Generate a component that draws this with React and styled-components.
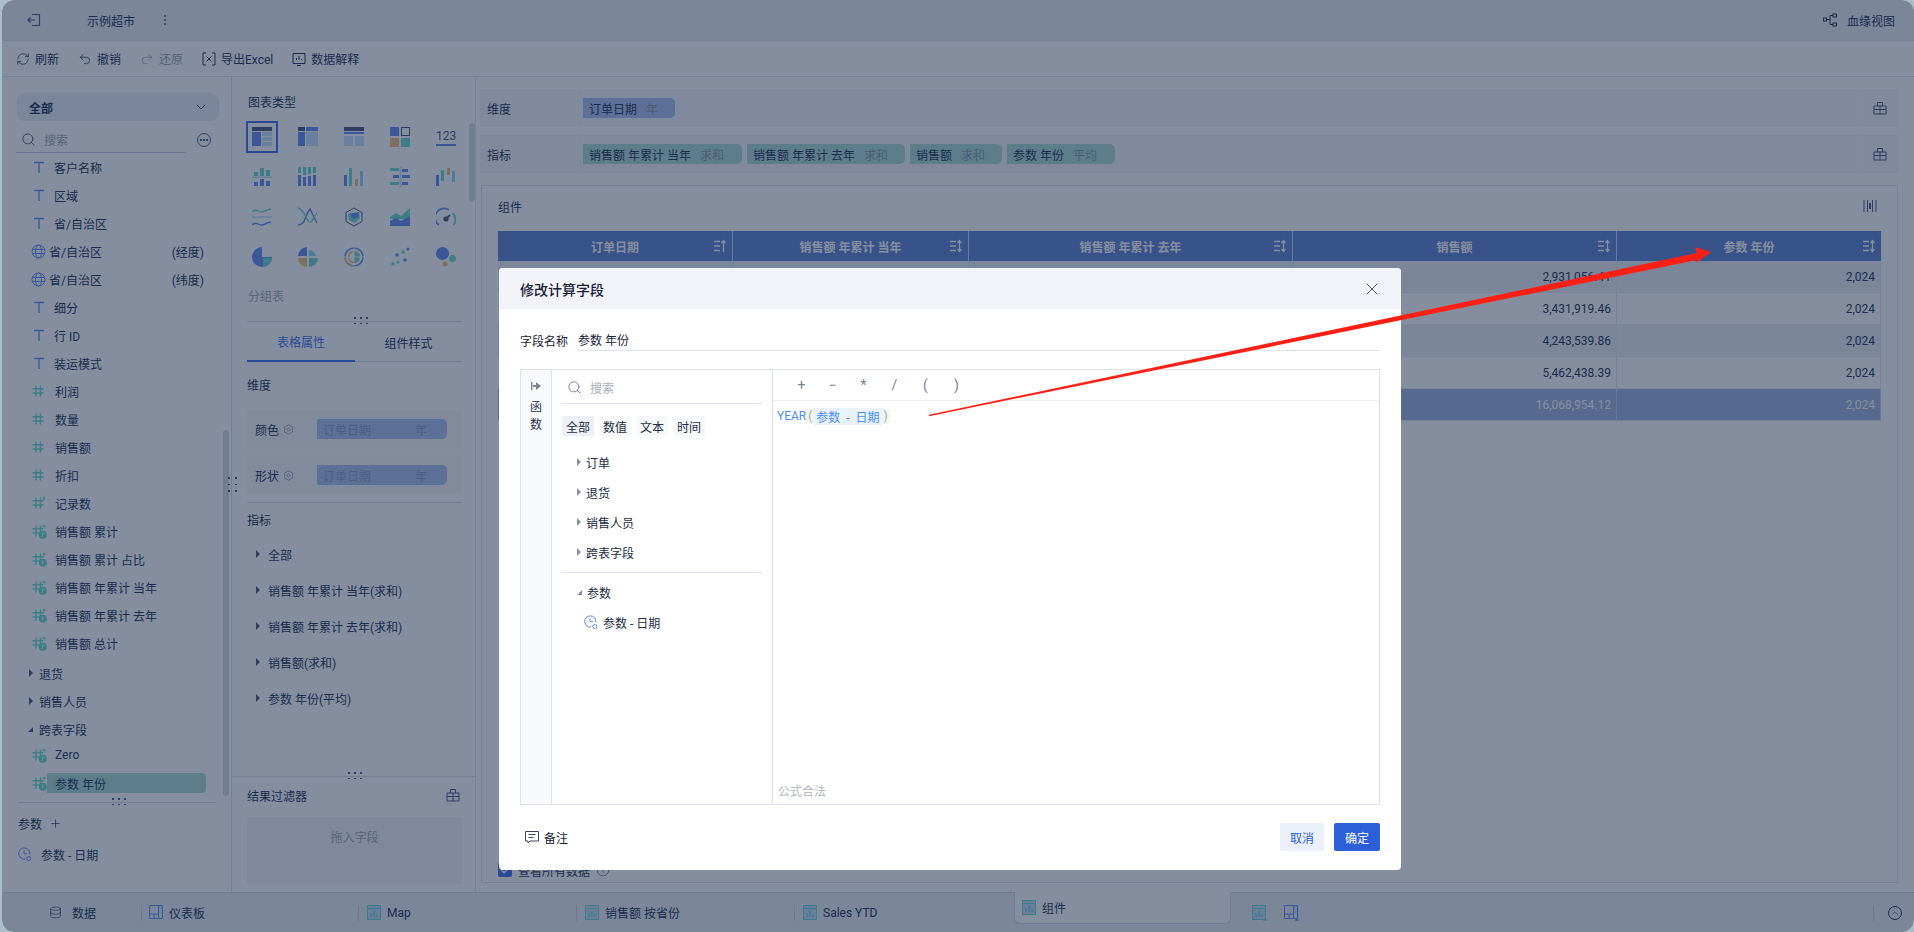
import React from 'react';
import styled, { createGlobalStyle } from 'styled-components';
import { X, ChevronDown, Search, Plus, ChevronUp, Database, RefreshCw, Undo2, Redo2, Info, Check } from 'lucide-react';

const ink = '#2b3a5e';
const blue = '#6a90f5';
const teal = '#6fdcd0';
const brown = '#f0bf80';
const sky = '#8fd8f5';
const navy = '#515f87';
const pale = '#c9e1ff';
const line = '#dde2ec';

const GlobalStyle = createGlobalStyle`
  html, body { margin: 0; padding: 0; height: 100%; overflow: hidden; background: #a9bcc8; }
  body { font-family: Roboto, "Noto Sans CJK SC", sans-serif; font-size: 12px; color: ${ ink }; }
  *, *::before, *::after { box-sizing: border-box; }
`;

const Stage = styled.div`
  position: relative;
  width: 1914px;
  height: 932px;
  padding-left: 2px;
`;

const Frame = styled.div`
  position: relative;
  display: flex;
  flex-direction: column;
  width: 1912px;
  height: 932px;
  overflow: hidden;
  border-radius: 12px;
  background: #fff;
`;

const Header = styled.header`
  display: flex;
  flex: 0 0 41px;
  align-items: center;
  background: #ebeff7;
  border-bottom: 1px solid #dfe4ee;
`;

const BackCell = styled.div`
  display: flex;
  justify-content: center;
  width: 64px;
  height: 40px;
  align-items: center;
  border-right: 1px solid #e4e8f1;
`;

const Title = styled.span`
  width: 77px;
  margin-left: 21px;
  color: ${ ink };
`;

const Kebab = styled.span`
  display: flex;
  flex-direction: column;
  gap: 2px;
  i { width: 2px; height: 2px; background: ${ navy }; border-radius: 50%; }
`;

const LineageLink = styled.div`
  display: flex;
  align-items: center;
  gap: 9px;
  margin-left: auto;
  margin-right: 19px;
`;

const Toolbar = styled.div`
  display: flex;
  flex: 0 0 36px;
  align-items: center;
  padding-left: 14px;
  border-bottom: 1px solid #e1e5ee;
`;

const ToolButton = styled.div`
  display: flex;
  align-items: center;
  gap: 5px;
  margin-right: ${ (props) => props.$gap }px;
  color: ${ (props) => (props.$off ? '#9aa3b8' : ink) };
`;

const Body = styled.div`
  display: flex;
  flex: 1;
  min-height: 0;
`;

const FieldPanel = styled.aside`
  position: relative;
  display: flex;
  flex-direction: column;
  flex: 0 0 230px;
  min-width: 0;
  border-right: 1px solid #dfe3ec;
`;

const SourceSelect = styled.div`
  display: flex;
  flex: 0 0 28px;
  align-items: center;
  justify-content: space-between;
  margin: 16px 12px 0 15px;
  padding: 0 10px 0 12px;
  border-radius: 8px;
  background: #e8eef8;
  font-weight: 700;
`;

const SearchRow = styled.div`
  display: flex;
  flex: 0 0 32px;
  align-items: center;
  margin-left: 14px;
`;

const SearchBox = styled.div`
  display: flex;
  align-items: center;
  gap: 8px;
  width: 170px;
  height: 26px;
  padding: 0 0 0 5px;
  margin-top: 5px;
  border-bottom: 1px solid #c9cfdc;
  color: #a4abbb;
`;

const RoundButton = styled.span`
  display: flex;
  align-items: center;
  justify-content: center;
  width: 14px;
  height: 14px;
  gap: 1.5px;
  margin: 6px 0 0 11px;
  border: 1px solid ${ navy };
  border-radius: 50%;
  i { width: 1.5px; height: 1.5px; background: ${ navy }; }
`;

const FieldList = styled.div`
  flex: 1;
  min-height: 0;
  overflow: hidden;
`;

const FieldRow = styled.div`
  display: flex;
  align-items: center;
  height: 28px;
  padding-left: ${ (props) => (props.$geo ? 29 : 30) }px;
  gap: ${ (props) => (props.$geo ? 3 : 8) }px;
`;

const FieldName = styled.span`
  white-space: pre;
`;

const Picked = styled.span`
  display: flex;
  align-items: center;
  width: 159px;
  height: 20px;
  margin-left: -8px;
  padding-left: 8px;
  border-radius: 0 4px 4px 0;
  background: #b1dddb;
`;

const GeoNote = styled.span`
  margin-left: auto;
  margin-right: 27px;
`;

const GroupRow = styled.div`
  display: flex;
  align-items: center;
  gap: 6px;
  height: 28px;
  padding-left: ${ (props) => props.$left }px;
  margin-top: ${ (props) => props.$top || 0 }px;
  margin-bottom: ${ (props) => props.$bottom || 0 }px;
`;

const Caret = styled.i`
  width: 0;
  height: 0;
  flex: none;
  border-style: solid;
  border-width: 4px 0 4px 4px;
  border-color: transparent transparent transparent ${ (props) => props.$color || navy };
`;

const OpenCaret = styled.i`
  width: 0;
  height: 0;
  flex: none;
  border-style: solid;
  border-width: 0 0 5px 5px;
  border-color: transparent transparent ${ (props) => props.$color || navy } transparent;
`;

const ScrollThumb = styled.span`
  position: absolute;
  width: 6px;
  border-radius: 3px;
  background: #d7dde8;
  left: ${ (props) => props.$left }px;
  top: ${ (props) => props.$top }px;
  height: ${ (props) => props.$height }px;
`;

const Grip = styled.span`
  position: absolute;
  display: grid;
  grid-template-columns: repeat(${ (props) => (props.$tall ? 2 : 3) }, 2px);
  gap: ${ (props) => (props.$tall ? '5px 5px' : '4px 4px') };
  left: ${ (props) => props.$left }px;
  top: ${ (props) => props.$top }px;
  i { width: 1.5px; height: 1.5px; background: ${ navy }; }
`;

const ParamSection = styled.div`
  position: relative;
  flex: 0 0 90px;
  margin: 0 15px 0 16px;
  border-top: 1px solid #d9deea;
`;

const ParamHead = styled.div`
  display: flex;
  align-items: center;
  gap: 7px;
  height: 18px;
  margin-top: 11px;
`;

const ParamRow = styled.div`
  display: flex;
  align-items: center;
  gap: 9px;
  margin-top: 12px;
  height: 20px;
`;

const ChartPanel = styled.section`
  position: relative;
  display: flex;
  flex-direction: column;
  flex: 0 0 244px;
  min-width: 0;
  border-right: 1px solid #e5e8f0;
`;

const SectionLabel = styled.div`
  height: 18px;
  line-height: 18px;
  padding-left: ${ (props) => props.$left || 15 }px;
  margin-top: ${ (props) => props.$top || 0 }px;
  color: ${ (props) => (props.$dim ? '#a4abbb' : ink) };
`;

const ChartGrid = styled.div`
  display: grid;
  grid-template-columns: repeat(5, 46px);
  grid-auto-rows: 40px;
  margin: 5px 0 0 7px;
`;

const ChartCell = styled.div`
  position: relative;
  display: flex;
  align-items: center;
  justify-content: center;
  &::after {
    content: ${ (props) => (props.$on ? '""' : 'none') };
    position: absolute;
    left: 7px;
    top: 4px;
    width: 32px;
    height: 32px;
    border: 2px solid #4977f3;
  }
`;

const ChartDivider = styled.div`
  position: relative;
  height: 1px;
  margin: 15px 13px 0 15px;
  background: #dde1ea;
`;

const TabBar = styled.div`
  display: flex;
  height: 40px;
  margin: 0 13px 0 15px;
  border-bottom: 1px solid #dde1ea;
`;

const PropTab = styled.div`
  display: flex;
  align-items: center;
  justify-content: center;
  flex: ${ (props) => (props.$on ? '0 0 108px' : '1') };
  height: 40px;
  color: ${ (props) => (props.$on ? '#4977f3' : ink) };
  border-bottom: ${ (props) => (props.$on ? '2px solid #4977f3' : 'none') };
`;

const MarkBlock = styled.div`
  display: flex;
  align-items: center;
  height: 38px;
  margin: ${ (props) => props.$top || 0 }px 13px 8px 15px;
  padding-left: 8px;
  background: #f7f8fb;
`;

const MarkName = styled.span`
  width: 24px;
`;

const GearDot = styled.span`
  display: flex;
  width: 12px;
  margin: 0 22px 0 4px;
`;

const MarkChip = styled.div`
  display: flex;
  align-items: center;
  justify-content: space-between;
  width: 130px;
  height: 20px;
  padding: 0 20px 0 6px;
  border-radius: 0 5px 5px 0;
  background: #adc3f3;
  color: #8da0c5;
`;

const PropDivider = styled.div`
  height: 1px;
  margin: 0 13px 0 15px;
  background: #dde1ea;
`;

const MeasureList = styled.div`
  margin-top: 6px;
`;

const MeasureRow = styled.div`
  display: flex;
  align-items: center;
  gap: 8px;
  height: 36px;
  padding-left: 24px;
`;

const ResultSection = styled.div`
  position: relative;
  height: 116px;
  margin-top: auto;
  border-top: 1px solid #dde1ea;
  padding: 8px 13px 0 15px;
`;

const ResultHead = styled.div`
  display: flex;
  align-items: center;
  justify-content: space-between;
  height: 20px;
  padding-right: 2px;
`;

const DropArea = styled.div`
  display: flex;
  justify-content: center;
  height: 67px;
  margin-top: 12px;
  padding-top: 11px;
  background: #f3f4f8;
  color: #a4abbb;
`;

const Main = styled.main`
  display: flex;
  flex: 1;
  flex-direction: column;
  min-width: 0;
  padding: 12px 16px 9px 4px;
`;

const ShelfRow = styled.div`
  display: flex;
  align-items: center;
  flex: 0 0 38px;
  margin-bottom: 8px;
  background: #f6f7fa;
`;

const ShelfLabel = styled.div`
  display: flex;
  align-items: center;
  flex: 0 0 97px;
  height: 100%;
  padding-left: 7px;
  border-right: 1px solid #fafbfd;
`;

const ShelfChips = styled.div`
  display: flex;
  flex: 1;
  gap: 5px;
  padding-left: 6px;
`;

const Pill = styled.div`
  display: flex;
  align-items: center;
  gap: 6px;
  height: 20px;
  width: ${ (props) => props.$width }px;
  padding-left: 6px;
  border-radius: 0 5px 5px 0;
  background: ${ (props) => (props.$kind === 'dim' ? '#adc3f3' : '#b1dddb') };
  white-space: pre;
  em { font-style: normal; color: #8a99b0; }
`;

const ShelfTool = styled.div`
  display: flex;
  align-items: center;
  justify-content: center;
  flex: 0 0 37px;
  height: 100%;
  border-left: 1px solid #fafbfd;
`;

const Canvas = styled.section`
  display: flex;
  flex: 1;
  flex-direction: column;
  margin: 4px 0 0 1px;
  padding: 0 16px 3px 16px;
  border: 1px solid #e0e4ec;
`;

const CanvasHead = styled.div`
  display: flex;
  align-items: center;
  justify-content: space-between;
  flex: 0 0 45px;
  padding: 0 4px 5px 0;
`;

const DataGrid = styled.div`
  display: grid;
  grid-template-columns: 235px 236px 324px 324px 264px;
`;

const HeadCell = styled.div`
  position: relative;
  display: flex;
  align-items: center;
  justify-content: center;
  height: 30px;
  background: #6587d7;
  border-right: 1px solid #cfdaf3;
  color: #fff;
  font-weight: 700;
  &:nth-child(5) { border-right: none; }
`;

const SortMark = styled.span`
  position: absolute;
  display: flex;
  right: 5px;
  top: 8px;
`;

const BodyCell = styled.div`
  display: flex;
  align-items: center;
  justify-content: flex-end;
  height: 32px;
  padding-right: 5px;
  background: ${ (props) => (props.$total ? '#a0b4df' : props.$odd ? '#ebeff9' : '#fff') };
  color: ${ (props) => (props.$total ? '#fff' : '#2e3c5c') };
  border-right: 1px solid ${ (props) => (props.$total ? '#c7d4f0' : '#e6e9f0') };
  border-bottom: 1px solid #e6e9f0;
`;

const AllData = styled.div`
  display: flex;
  align-items: center;
  gap: 6px;
  height: 18px;
  margin-top: auto;
`;

const CheckBox = styled.span`
  display: flex;
  align-items: center;
  justify-content: center;
  width: 14px;
  height: 14px;
  border-radius: 2px;
  background: #4977f3;
  color: #fff;
`;

const Footer = styled.footer`
  display: flex;
  flex: 0 0 40px;
  align-items: center;
  background: #ebeff7;
  border-top: 1px solid #d5dbe8;
`;

const SheetTab = styled.div`
  display: flex;
  align-items: center;
  gap: ${ (props) => props.$gap || 5 }px;
  width: ${ (props) => props.$width }px;
  height: 16px;
  padding-left: ${ (props) => props.$left }px;
  border-right: 1px solid ${ (props) => (props.$edge ? '#cdd3e0' : 'transparent') };
  white-space: pre;
`;

const ActiveTab = styled.div`
  display: flex;
  align-items: center;
  gap: 5px;
  align-self: flex-start;
  width: 217px;
  height: 32px;
  margin-top: -1px;
  padding-left: 7px;
  border: 1px solid #d5dbe8;
  border-top: none;
  border-radius: 0 0 6px 6px;
  background: #fff;
`;

const AddSheets = styled.div`
  display: flex;
  gap: 17px;
  margin-left: 21px;
`;

const Collapse = styled.div`
  display: flex;
  align-items: center;
  justify-content: center;
  width: 33px;
  height: 16px;
  margin-left: auto;
  margin-right: 8px;
  border-left: 1px solid #cdd3e0;
  padding-left: 9px;
`;

const CollapseRound = styled.span`
  display: flex;
  align-items: center;
  justify-content: center;
  width: 14px;
  height: 14px;
  border: 1px solid ${ ink };
  border-radius: 50%;
`;

const Overlay = styled.div`
  position: absolute;
  inset: 0;
  padding: 268px 0 0 497px;
  background: rgba(11, 29, 61, 0.5);
`;

const Modal = styled.div`
  display: flex;
  flex-direction: column;
  width: 902px;
  height: 602px;
  border-radius: 4px;
  overflow: hidden;
  background: #fff;
`;

const ModalHead = styled.div`
  display: flex;
  align-items: center;
  justify-content: space-between;
  flex: 0 0 41px;
  padding: 0 19px 0 21px;
  background: #f2f3f8;
  font-size: 14px;
  font-weight: 500;
  color: #1a2238;
`;

const NameRow = styled.div`
  display: flex;
  align-items: center;
  gap: 10px;
  height: 22px;
  margin: 20px 21px 0;
  color: #1a2238;
`;

const NameInput = styled.div`
  display: flex;
  align-items: center;
  flex: 1;
  height: 22px;
  padding-bottom: 1px;
  border-bottom: 1px solid ${ line };
`;

const Editor = styled.div`
  display: flex;
  flex: 0 0 436px;
  margin: 18px 21px 0;
  border: 1px solid ${ line };
`;

const FnRail = styled.div`
  display: flex;
  flex-direction: column;
  align-items: center;
  flex: 0 0 31px;
  padding-top: 9px;
  background: #f8f9fd;
  border-right: 1px solid ${ line };
  line-height: 18px;
  color: #2b3550;
`;

const RailIcon = styled.span`
  display: flex;
  height: 14px;
  margin-bottom: 5px;
`;

const FnList = styled.div`
  display: flex;
  flex-direction: column;
  flex: 0 0 221px;
  border-right: 1px solid ${ line };
`;

const FnSearch = styled.div`
  display: flex;
  align-items: center;
  gap: 8px;
  height: 34px;
  margin: 0 10px;
  padding-left: 5px;
  padding-top: 2px;
  border-bottom: 1px solid ${ line };
  color: #a8aebb;
`;

const KindTabs = styled.div`
  display: flex;
  gap: 5px;
  margin: 12px 10px 11px;
`;

const KindTab = styled.span`
  display: flex;
  align-items: center;
  justify-content: center;
  width: 32px;
  height: 20px;
  border-radius: 2px;
  background: ${ (props) => (props.$on ? '#eef0f5' : '#f8f9fb') };
  color: #222c44;
`;

const TreeRow = styled.div`
  display: flex;
  align-items: center;
  gap: 5px;
  height: 30px;
  padding-left: ${ (props) => props.$left || 25 }px;
  color: #222c44;
`;

const TreeDivider = styled.div`
  height: 1px;
  margin: 5px 10px 4px;
  background: ${ line };
`;

const Formula = styled.div`
  display: flex;
  flex-direction: column;
  flex: 1;
  min-width: 0;
`;

const OpsBar = styled.div`
  display: flex;
  flex: 0 0 31px;
  align-items: center;
  padding-left: 13px;
  border-bottom: 1px solid #eceef4;
`;

const Op = styled.span`
  width: 31px;
  text-align: center;
  font-size: 14px;
  color: #7c8291;
`;

const FormulaLine = styled.div`
  display: flex;
  align-items: center;
  height: 16px;
  margin: 7px 0 0 4px;
  color: #4c8cf5;
`;

const ParenMark = styled.span`
  padding: 0 2px;
  background: #f1f6f1;
  color: #a9a9a0;
`;

const TokenMark = styled.span`
  padding: 0 2px;
  background: #e9f3ff;
  color: #4c8cf5;
  white-space: pre;
`;

const FormulaStatus = styled.div`
  margin-top: auto;
  padding: 0 0 5px 5px;
  color: #b1b5c0;
`;

const ModalFoot = styled.div`
  display: flex;
  align-items: center;
  margin: 18px 21px 0;
  height: 28px;
`;

const NoteLink = styled.div`
  display: flex;
  align-items: center;
  gap: 5px;
  padding-left: 5px;
  margin-right: auto;
  color: #1a2238;
`;

const ModalButton = styled.button`
  width: ${ (props) => (props.$primary ? 46 : 44) }px;
  height: 28px;
  margin-left: ${ (props) => (props.$primary ? 10 : 0) }px;
  padding: 0;
  border: none;
  border-radius: 2px;
  background: ${ (props) => (props.$primary ? '#2c60db' : '#ebf0fb') };
  color: ${ (props) => (props.$primary ? '#fff' : '#2c60db') };
  font: inherit;
`;

const ArrowLayer = styled.svg`
  position: absolute;
  left: 0;
  top: 0;
  pointer-events: none;
`;

const Dots = ({ n = 3 }) => Array.from({ length: n }).map((_, i) => <i key={ i } />);

const TextIcon = () => (
  <svg width="14" height="14" viewBox="0 0 14 14" fill="none" stroke={ blue } strokeWidth="1.3"><path d="M2 2.5h10M7 2.5V13" /></svg>
);

const HashIcon = ({ star, calc }) => (
  <svg width="15" height="15" viewBox="0 0 15 15" fill="none" stroke={ teal } strokeWidth="1.4">
    <path d="M4 1.5v11M8.5 1.5v11M0.5 4.8h11M0.5 9h11" />
    { star && <path d="M12 0.5v3.4M10.4 2.2h3.2" strokeWidth="1" /> }
    { calc && <circle cx="10.8" cy="10.8" r="4" fill={ teal } stroke="none" /> }
    { calc && <path d="M11.8 8.8h-1l-.6 4" stroke="#fff" strokeWidth=".9" /> }
  </svg>
);

const GlobeIcon = () => (
  <svg width="15" height="15" viewBox="0 0 15 15" fill="none" stroke={ blue } strokeWidth="1">
    <circle cx="7.5" cy="7.5" r="6.5" /><ellipse cx="7.5" cy="7.5" rx="3" ry="6.5" /><path d="M1 5.5h13M1 9.5h13" />
  </svg>
);

const ClockIcon = ({ color = blue }) => (
  <svg width="14" height="15" viewBox="0 0 14 15" fill="none" stroke={ color } strokeWidth="1">
    <path d="M11.8 7.2A5.6 5.6 0 1 0 7.2 12" /><path d="M6 3.5v3.2h3" /><circle cx="10.8" cy="11.5" r="2" />
  </svg>
);

const FieldGlyph = ({ type }) => {
  if (type === 't') return <TextIcon />;
  if (type === 'geo') return <GlobeIcon />;
  if (type === 'star') return <HashIcon star />;
  if (type === 'calc') return <HashIcon star calc />;
  return <HashIcon />;
};

const ShelfBox = () => (
  <svg width="14" height="14" viewBox="0 0 14 14" fill="none" stroke={ navy } strokeWidth="1"><path d="M1 5h12v8H1zM4.5 5V1.5h5V5M7 5v8M1 8.5h12" /></svg>
);

const Gear = () => (
  <svg width="11" height="11" viewBox="0 0 11 11" fill="none" stroke="#a4abbb"><path d="M5.5.8l4 2.3v4.8l-4 2.3-4-2.3V3.1z" /><circle cx="5.5" cy="5.5" r="1.5" /></svg>
);

const SortIcon = ({ up }) => (
  <svg width="14" height="14" viewBox="0 0 14 14" fill="none" stroke="#fff" strokeWidth="1.3">
    <path d="M1 2.5h6M1 7h6M1 11.5h6M10.5 13V2" />
    <path d="M8.5 4l2-2.5 2 2.5" />
    { !up && <path d="M8.5 10l2 2.5 2-2.5" /> }
  </svg>
);

const SheetIcon = ({ plus }) => (
  <svg width="15" height="16" viewBox="0 0 15 16" fill="none">
    <rect x=".5" y=".5" width="13" height="14" fill={ pale } stroke={ teal } />
    <path d="M.5 3.5h13" stroke={ teal } />
    <path d="M4 12V8M7 12V6M10 12V9" stroke={ teal } strokeWidth="1.4" />
    { plus && <path d="M11 15h4M13 13v3" stroke={ teal } /> }
  </svg>
);

const DashIcon = ({ plus }) => (
  <svg width="15" height="16" viewBox="0 0 15 16" fill="none" stroke={ blue }>
    <path d="M.5.5h13v13H.5zM.5 9h9M9.5.5v13M5 9v4.5" />
    <path d="M10 1h3v4h-3zM10 6h3v3h-3z" fill={ pale } stroke="none" />
    { plus && <path d="M11 15h4M13 13v3" /> }
  </svg>
);

const charts = [
  <><rect width="20" height="4" fill={ navy } /><rect y="5" width="9" height="14" fill={ blue } /><rect x="10" y="5" width="10" height="4" fill={ pale } /><rect x="10" y="10" width="10" height="4" fill={ pale } /><rect x="10" y="15" width="10" height="4" fill={ pale } /></>,
  <><rect width="7" height="4" fill={ navy } /><rect x="8" width="12" height="4" fill={ blue } /><rect y="5" width="7" height="14" fill={ blue } /><rect x="8" y="5" width="12" height="14" fill={ pale } /></>,
  <><rect width="20" height="4" fill={ navy } /><rect y="5" width="20" height="2" fill={ blue } /><rect y="9" width="9" height="10" fill={ pale } /><rect x="11" y="9" width="9" height="10" fill={ pale } /></>,
  <><rect width="9" height="9" fill={ blue } /><rect x="11.5" y=".5" width="8" height="8" fill="none" stroke={ navy } /><rect y="11" width="9" height="9" fill={ brown } /><rect x="11" y="11" width="9" height="9" fill={ teal } /></>,
  <><text x="10" y="13" fontSize="12" textAnchor="middle" fill={ navy } fontFamily="Roboto, sans-serif">123</text><rect y="17" width="20" height="2" fill={ blue } /></>,
  <><rect x="2" y="5" width="4" height="4" fill={ teal } /><rect x="8" y="1" width="4" height="8" fill={ teal } /><rect x="14" y="3" width="4" height="6" fill={ teal } /><rect y="9.5" width="20" height="1.5" fill={ pale } /><rect x="2" y="15" width="4" height="4" fill={ blue } /><rect x="8" y="12" width="4" height="7" fill={ blue } /><rect x="14" y="14" width="4" height="5" fill={ blue } /></>,
  <>{ [0, 5, 10, 15].map((x) => <g key={ x }><rect x={ x } y="0" width="3" height={ 6 + x % 3 } fill={ teal } /><rect x={ x } y={ 8 + x % 3 } width="3" height={ 11 - x % 3 } fill={ blue } /></g>) }</>,
  <><rect y="8" width="3" height="11" fill={ blue } /><rect x="5" y="1" width="3" height="18" fill={ teal } /><rect x="11" y="12" width="3" height="7" fill={ brown } /><rect x="16" y="4" width="3" height="15" fill={ sky } /></>,
  <><rect x="9.5" width="2" height="20" fill={ pale } /><rect y="1" width="9" height="3" fill={ teal } /><rect x="12" y="2" width="6" height="3" fill={ blue } /><rect x="3" y="8" width="6" height="3" fill={ blue } /><rect x="12" y="8" width="8" height="3" fill={ blue } /><rect y="15" width="9" height="3" fill={ teal } /><rect x="12" y="15" width="6" height="3" fill={ blue } /></>,
  <><rect y="8" width="3" height="11" fill={ blue } /><rect x="5" y="3" width="3" height="11" fill={ teal } /><rect x="11" y="1" width="3" height="7" fill={ brown } /><rect x="16" y="4" width="3" height="11" fill={ sky } /></>,
  <g fill="none" strokeWidth="1.5"><path d="M0 5q3-3 6-1t7 0 6-2" stroke={ teal } /><path d="M0 10h20" stroke={ pale } /><path d="M0 18q3-3 6-1t7 0 6-2" stroke={ blue } /></g>,
  <g fill="none" strokeWidth="1.5"><path d="M0 18q5 0 7-6t5-10l7 14" stroke={ blue } /><path d="M0 1q4 1 8 9t6 4 5-8" stroke={ teal } /></g>,
  <><path d="M10 1l8 4.5v9L10 19l-8-4.5v-9z" fill="none" stroke={ navy } /><path d="M4 7l11-2 1 6-5 5-6-3z" fill={ teal } /><path d="M6 6.5l9-1-1 5-4 1-3-2z" fill={ blue } /></>,
  <><path d="M0 10l6-4 5 3 9-8v11H0z" fill={ teal } /><path d="M0 19v-5l6-3 5 3 9-5v10z" fill={ blue } /></>,
  <g fill="none" strokeWidth="1.8"><path d="M3 18a9 9 0 0 1 10-15" stroke={ blue } /><path d="M16.5 6a9 9 0 0 1 1 12" stroke={ teal } /><circle cx="10" cy="12" r="2.6" fill={ navy } stroke="none" /><path d="M10 12l4-4" stroke={ navy } /></g>,
  <><path d="M10 0a10 10 0 1 0 10 10H10z" fill={ blue } /><path d="M11 11h9a9 9 0 0 1-9 9z" fill={ teal } /></>,
  <><path d="M9 0v9H0a9 9 0 0 1 9-9z" fill={ blue } /><path d="M11 3a8 8 0 0 1 7 6h-7z" fill={ sky } /><path d="M0 11h9v9a9 9 0 0 1-9-9z" fill={ brown } /><path d="M11 11h9a9 9 0 0 1-9 9z" fill={ teal } /></>,
  <g fill="none"><circle cx="10" cy="10" r="9" stroke={ blue } strokeWidth="1.5" /><path d="M1 10a9 9 0 0 0 9 9" stroke={ brown } strokeWidth="1.6" /><circle cx="10" cy="10" r="5.5" stroke={ brown } strokeWidth="1.6" /><path d="M10 4.5a5.5 5.5 0 0 1 0 11z" fill={ teal } /><path d="M10 0v20M0 10h20" stroke="#fff" /></g>,
  <><circle cx="3" cy="17" r="1.7" fill={ teal } /><circle cx="7" cy="8" r="1.8" fill={ blue } /><circle cx="8" cy="15" r="1.5" fill={ teal } /><circle cx="13" cy="5" r="1.8" fill={ teal } /><circle cx="15" cy="13" r="1.8" fill={ blue } /><circle cx="18" cy="2" r="1.6" fill={ blue } /></>,
  <><circle cx="6.5" cy="6.5" r="6.5" fill={ blue } /><circle cx="16.5" cy="11.5" r="3.5" fill={ teal } /><circle cx="9" cy="17" r="2.5" fill={ brown } /></>
];

const fields = [
  ['t', '客户名称'], ['t', '区域'], ['t', '省/自治区'],
  ['geo', '省/自治区', '(经度)'], ['geo', '省/自治区', '(纬度)'],
  ['t', '细分'], ['t', '行 ID'], ['t', '装运模式'],
  ['hash', '利润'], ['hash', '数量'], ['hash', '销售额'], ['hash', '折扣'],
  ['star', '记录数'], ['calc', '销售额 累计'], ['calc', '销售额 累计 占比'],
  ['calc', '销售额 年累计 当年'], ['calc', '销售额 年累计 去年'], ['calc', '销售额 总计']
];

const measureChips = [
  ['销售额 年累计 当年', '求和', 159],
  ['销售额 年累计 去年', '求和', 158],
  ['销售额', '求和', 92],
  ['参数 年份', '平均', 108]
];

const tableRows = [
  ['2,931,056.41', '2,024'],
  ['3,431,919.46', '2,024'],
  ['4,243,539.86', '2,024'],
  ['5,462,438.39', '2,024'],
  ['16,068,954.12', '2,024']
];

const FieldsColumn = () => (
  <FieldPanel>
    <SourceSelect>全部<ChevronDown size={ 16 } strokeWidth={ 1.4 } /></SourceSelect>
    <SearchRow>
      <SearchBox><Search size={ 15 } strokeWidth={ 1.2 } color={ ink } />搜索</SearchBox>
      <RoundButton><Dots /></RoundButton>
    </SearchRow>
    <FieldList>
      { fields.map(([type, name, note], i) => (
        <FieldRow key={ i } $geo={ type === 'geo' }>
          <FieldGlyph type={ type } />
          <FieldName>{ name }</FieldName>
          { note && <GeoNote>{ note }</GeoNote> }
        </FieldRow>
      )) }
      <GroupRow $left={ 27 } $top={ 2 }><Caret />退货</GroupRow>
      <GroupRow $left={ 27 }><Caret />销售人员</GroupRow>
      <GroupRow $left={ 26 } $bottom={ -2 }><OpenCaret />跨表字段</GroupRow>
      <FieldRow><HashIcon star calc /><FieldName>Zero</FieldName></FieldRow>
      <FieldRow><HashIcon star calc /><Picked>参数 年份</Picked></FieldRow>
    </FieldList>
    <ScrollThumb $left={ 221 } $top={ 353 } $height={ 366 } />
    <Grip $tall $left={ 226 } $top={ 400 }><Dots n={ 6 } /></Grip>
    <ParamSection>
      <Grip $left={ 94 } $top={ -5 }><Dots n={ 6 } /></Grip>
      <ParamHead>参数<Plus size={ 13 } strokeWidth={ 1.3 } /></ParamHead>
      <ParamRow><ClockIcon />参数 - 日期</ParamRow>
    </ParamSection>
  </FieldPanel>
);

const ChartColumn = () => (
  <ChartPanel>
    <SectionLabel $left={ 16 } $top={ 17 }>图表类型</SectionLabel>
    <ChartGrid>
      { charts.map((art, i) => (
        <ChartCell key={ i } $on={ i === 0 }>
          <svg width="20" height="20" viewBox="0 0 20 20">{ art }</svg>
        </ChartCell>
      )) }
    </ChartGrid>
    <ScrollThumb $left={ 237 } $top={ 46 } $height={ 78 } />
    <SectionLabel $left={ 16 } $top={ 11 } $dim>分组表</SectionLabel>
    <ChartDivider><Grip $left={ 107 } $top={ -4 }><Dots n={ 6 } /></Grip></ChartDivider>
    <TabBar>
      <PropTab $on>表格属性</PropTab>
      <PropTab>组件样式</PropTab>
    </TabBar>
    <SectionLabel $top={ 15 }>维度</SectionLabel>
    <MarkBlock $top={ 15 }>
      <MarkName>颜色</MarkName><GearDot><Gear /></GearDot>
      <MarkChip><span>订单日期</span><span>年</span></MarkChip>
    </MarkBlock>
    <MarkBlock>
      <MarkName>形状</MarkName><GearDot><Gear /></GearDot>
      <MarkChip><span>订单日期</span><span>年</span></MarkChip>
    </MarkBlock>
    <PropDivider />
    <SectionLabel $top={ 9 }>指标</SectionLabel>
    <MeasureList>
      { ['全部', '销售额 年累计 当年(求和)', '销售额 年累计 去年(求和)', '销售额(求和)', '参数 年份(平均)'].map((name) => (
        <MeasureRow key={ name }><Caret />{ name }</MeasureRow>
      )) }
    </MeasureList>
    <ResultSection>
      <Grip $left={ 116 } $top={ -5 }><Dots n={ 6 } /></Grip>
      <ResultHead>结果过滤器<ShelfBox /></ResultHead>
      <DropArea>拖入字段</DropArea>
    </ResultSection>
  </ChartPanel>
);

const WorkArea = () => (
  <Main>
    <ShelfRow>
      <ShelfLabel>维度</ShelfLabel>
      <ShelfChips><Pill $kind="dim" $width={ 92 }>订单日期 <em>年</em></Pill></ShelfChips>
      <ShelfTool><ShelfBox /></ShelfTool>
    </ShelfRow>
    <ShelfRow>
      <ShelfLabel>指标</ShelfLabel>
      <ShelfChips>
        { measureChips.map(([name, agg, width]) => (
          <Pill key={ name } $width={ width }>{ name } <em>{ agg }</em></Pill>
        )) }
      </ShelfChips>
      <ShelfTool><ShelfBox /></ShelfTool>
    </ShelfRow>
    <Canvas>
      <CanvasHead>
        组件
        <svg width="14" height="14" viewBox="0 0 14 14" fill="none" stroke={ navy }><path d="M1 1v12M13 1v12M4.5 1v12M9.5 1v12" /><path d="M7 4v6" strokeWidth="2" /></svg>
      </CanvasHead>
      <DataGrid>
        { ['订单日期', '销售额 年累计 当年', '销售额 年累计 去年', '销售额', '参数 年份'].map((name, i) => (
          <HeadCell key={ name }>{ name }<SortMark><SortIcon up={ i === 0 } /></SortMark></HeadCell>
        )) }
        { tableRows.map(([sales, year], i) => (
          <React.Fragment key={ sales }>
            <BodyCell $odd={ i % 2 === 0 } $total={ i === 4 } />
            <BodyCell $odd={ i % 2 === 0 } $total={ i === 4 } />
            <BodyCell $odd={ i % 2 === 0 } $total={ i === 4 } />
            <BodyCell $odd={ i % 2 === 0 } $total={ i === 4 }>{ sales }</BodyCell>
            <BodyCell $odd={ i % 2 === 0 } $total={ i === 4 }>{ year }</BodyCell>
          </React.Fragment>
        )) }
      </DataGrid>
      <AllData>
        <CheckBox><Check size={ 11 } strokeWidth={ 3 } /></CheckBox>
        查看所有数据
        <Info size={ 14 } strokeWidth={ 1 } />
      </AllData>
    </Canvas>
  </Main>
);

const EditDialog = () => (
  <Modal>
    <ModalHead>修改计算字段<X size={ 20 } strokeWidth={ 1 } color="#2b3550" /></ModalHead>
    <NameRow>字段名称<NameInput>参数 年份</NameInput></NameRow>
    <Editor>
      <FnRail>
        <RailIcon>
          <svg width="12" height="14" viewBox="0 0 12 14" fill="#7c8291"><rect x="1" y="3" width="1.4" height="8" /><path d="M3 6h3V3l5 4-5 4V8H3z" /></svg>
        </RailIcon>
        <span>函</span>
        <span>数</span>
      </FnRail>
      <FnList>
        <FnSearch><Search size={ 15 } strokeWidth={ 1.2 } color="#5b6275" />搜索</FnSearch>
        <KindTabs>
          <KindTab $on>全部</KindTab>
          <KindTab>数值</KindTab>
          <KindTab>文本</KindTab>
          <KindTab>时间</KindTab>
        </KindTabs>
        { ['订单', '退货', '销售人员', '跨表字段'].map((name) => (
          <TreeRow key={ name }><Caret $color="#8a8f9e" />{ name }</TreeRow>
        )) }
        <TreeDivider />
        <TreeRow><OpenCaret $color="#8a8f9e" />参数</TreeRow>
        <TreeRow $left={ 32 }><ClockIcon color="#5f8de8" />参数 - 日期</TreeRow>
      </FnList>
      <Formula>
        <OpsBar>
          { ['+', '−', '*', '/', '(', ')'].map((op) => <Op key={ op }>{ op }</Op>) }
        </OpsBar>
        <FormulaLine>
          YEAR
          <ParenMark>(</ParenMark>
          <TokenMark>参数  -  日期</TokenMark>
          <ParenMark>)</ParenMark>
        </FormulaLine>
        <FormulaStatus>公式合法</FormulaStatus>
      </Formula>
    </Editor>
    <ModalFoot>
      <NoteLink>
        <svg width="14" height="14" viewBox="0 0 14 14" fill="none" stroke="#3b445c"><path d="M.5 1.5h13v9.5H5l-2 2v-2H.5zM3.5 4.5h7M3.5 7.5h5" /></svg>
        备注
      </NoteLink>
      <ModalButton>取消</ModalButton>
      <ModalButton $primary>确定</ModalButton>
    </ModalFoot>
  </Modal>
);

export default function App() {
  return (
    <Stage>
      <GlobalStyle />
      <Frame>
        <Header>
          <BackCell>
            <svg width="14" height="14" viewBox="0 0 14 14" fill="none" stroke={ navy } strokeWidth="1.2"><path d="M5 1.5h7.5v11H5M1 7h7M3.5 4.5L1 7l2.5 2.5" /></svg>
          </BackCell>
          <Title>示例超市</Title>
          <Kebab><Dots /></Kebab>
          <LineageLink>
            <svg width="15" height="14" viewBox="0 0 15 14" fill="none" stroke={ ink }><rect x=".5" y="5" width="3" height="3" /><rect x="10" y="1" width="3.5" height="3" /><rect x="10" y="10" width="3.5" height="3" /><path d="M3.5 6.5H7M10 2.5H7v9h3" /></svg>
            血缘视图
          </LineageLink>
        </Header>
        <Toolbar>
          <ToolButton $gap={ 19 }><RefreshCw size={ 14 } strokeWidth={ 1.3 } />刷新</ToolButton>
          <ToolButton $gap={ 19 }><Undo2 size={ 14 } strokeWidth={ 1.3 } />撤销</ToolButton>
          <ToolButton $gap={ 19 } $off><Redo2 size={ 14 } strokeWidth={ 1.3 } />还原</ToolButton>
          <ToolButton $gap={ 19 }>
            <svg width="14" height="14" viewBox="0 0 14 14" fill="none" stroke={ ink }><path d="M4 1H1v12h3M10 1h3v12h-3M4.5 4.5l5 5M9.5 4.5l-5 5" /></svg>
            导出Excel
          </ToolButton>
          <ToolButton>
            <svg width="14" height="14" viewBox="0 0 14 14" fill="none" stroke={ ink }><path d="M1 1.5h12v10H1zM5 13.5h4M4.5 8V6M7 8V4M9.5 8V7" /></svg>
            数据解释
          </ToolButton>
        </Toolbar>
        <Body>
          <FieldsColumn />
          <ChartColumn />
          <WorkArea />
        </Body>
        <Footer>
          <SheetTab $width={ 140 } $left={ 47 } $gap={ 10 } $edge><Database size={ 13 } strokeWidth={ 1.2 } />数据</SheetTab>
          <SheetTab $width={ 217 } $left={ 7 } $edge><DashIcon />仪表板</SheetTab>
          <SheetTab $width={ 218 } $left={ 8 } $edge><SheetIcon />Map</SheetTab>
          <SheetTab $width={ 218 } $left={ 8 } $edge><SheetIcon />销售额 按省份</SheetTab>
          <SheetTab $width={ 219 } $left={ 8 }><SheetIcon />Sales YTD</SheetTab>
          <ActiveTab><SheetIcon />组件</ActiveTab>
          <AddSheets><SheetIcon plus /><DashIcon plus /></AddSheets>
          <Collapse><CollapseRound><ChevronUp size={ 10 } strokeWidth={ 1.4 } /></CollapseRound></Collapse>
        </Footer>
        <Overlay>
          <EditDialog />
        </Overlay>
      </Frame>
      <ArrowLayer width="1914" height="932" viewBox="0 0 1914 932">
        <path d="M929 414.8L1697 253L1695 247L1711 252L1696 263L1697 260L929 416.2Z" fill="#ff2015" />
      </ArrowLayer>
    </Stage>
  );
}
